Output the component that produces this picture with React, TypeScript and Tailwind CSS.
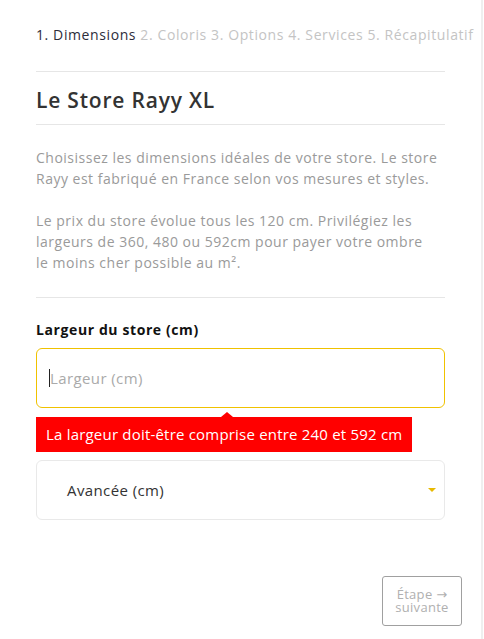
import React from "react";

export default function App() {
  return (
    <div
      className="w-[483px] min-h-[639px] bg-white border-r-2 border-[#efefef] flex flex-col"
      style={{ fontFamily: '"Open Sans", "DejaVu Sans", sans-serif' }}
    >
      <div className="pl-[36px] w-[445px] flex flex-col">
        <div className="pt-[25px] text-[14px] leading-[20px] tracking-[0.6px] whitespace-nowrap text-[#c4c4c4]">
          <span className="text-[#2d2d3a]">1. Dimensions</span> 2. Coloris 3. Options 4. Services 5. Récapitulatif
        </div>
        <div className="mt-[26px] h-px bg-[#e6e6e6]" />
        <h1 className="mt-[14px] text-[21px] leading-[28px] tracking-[0.8px] font-semibold text-[#333333]">Le Store Rayy XL</h1>
        <div className="mt-[10px] h-px bg-[#e6e6e6]" />
        <p className="mt-[22px] text-[14px] leading-[21px] tracking-[0.5px] text-[#9a9a9a]">
          Choisissez les dimensions idéales de votre store. Le store<br />
          Rayy est fabriqué en France selon vos mesures et styles.
        </p>
        <p className="mt-[21px] text-[14px] leading-[21px] tracking-[0.5px] text-[#9a9a9a]">
          Le prix du store évolue tous les 120 cm. Privilégiez les<br />
          largeurs de 360, 480 ou 592cm pour payer votre ombre<br />
          le moins cher possible au m².
        </p>
        <div className="mt-[24px] h-px bg-[#e6e6e6]" />
        <label className="mt-[22px] text-[14px] leading-[20px] tracking-[0.6px] font-bold text-[#111111]">Largeur du store (cm)</label>
        <div className="mt-[8px] h-[60px] rounded-[6px] border border-[#f0c200] flex items-center pl-[12px]">
          <span className="w-px h-[18px] bg-[#222]" />
          <span className="text-[15px] tracking-[0.4px] text-[#aaaaaa]">Largeur (cm)</span>
        </div>
        <div className="relative mt-[9px] w-[376px] h-[35px] bg-[#ff0000] flex items-center pl-[10px] text-[15px] tracking-[0.2px] text-white">
          <span className="absolute -top-[5px] left-[185px] w-0 h-0 border-l-[6px] border-r-[6px] border-b-[5px] border-l-transparent border-r-transparent border-b-[#ff0000]" />
          La largeur doit-être comprise entre 240 et 592 cm
        </div>
        <div className="mt-[8px] h-[60px] rounded-[6px] border border-[#e9e9e9] flex items-center justify-between pl-[30px] pr-[8px]">
          <span className="text-[15px] tracking-[0.4px] text-[#333333]">Avancée (cm)</span>
          <span className="w-0 h-0 border-l-[4px] border-r-[4px] border-t-[4px] border-l-transparent border-r-transparent border-t-[#e8b900]" />
        </div>
      </div>
      <div className="mt-[56px] flex justify-end pr-[19px]">
        <button className="w-[80px] h-[50px] rounded-[3px] border border-[#a0a0a0] text-[13px] leading-[13px] tracking-[0.3px] text-[#b0b0b0] flex flex-col items-center justify-center">
          <span>Étape →</span>
          <span>suivante</span>
        </button>
      </div>
    </div>
  );
}
